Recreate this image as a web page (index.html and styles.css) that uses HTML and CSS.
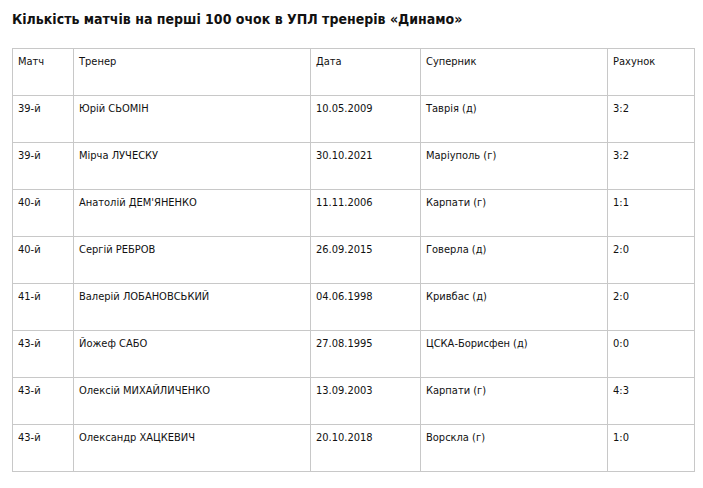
FILE: index.html
```html
<!DOCTYPE html>
<html lang="uk">
<head>
<meta charset="utf-8">
<link rel="stylesheet" href="styles.css">
</head>
<body>
<h2 class="title">Кількість матчів на перші 100 очок в УПЛ тренерів «Динамо»</h2>
<table class="stats">
  <colgroup>
    <col class="c1"><col class="c2"><col class="c3"><col class="c4"><col class="c5">
  </colgroup>
  <tr><td>Матч</td><td>Тренер</td><td>Дата</td><td>Суперник</td><td>Рахунок</td></tr>
  <tr><td>39-й</td><td>Юрій СЬОМІН</td><td>10.05.2009</td><td>Таврія (д)</td><td>3:2</td></tr>
  <tr><td>39-й</td><td>Мірча ЛУЧЕСКУ</td><td>30.10.2021</td><td>Маріуполь (г)</td><td>3:2</td></tr>
  <tr><td>40-й</td><td>Анатолій ДЕМ'ЯНЕНКО</td><td>11.11.2006</td><td>Карпати (г)</td><td>1:1</td></tr>
  <tr><td>40-й</td><td>Сергій РЕБРОВ</td><td>26.09.2015</td><td>Говерла (д)</td><td>2:0</td></tr>
  <tr><td>41-й</td><td>Валерій ЛОБАНОВСЬКИЙ</td><td>04.06.1998</td><td>Кривбас (д)</td><td>2:0</td></tr>
  <tr><td>43-й</td><td>Йожеф САБО</td><td>27.08.1995</td><td>ЦСКА-Борисфен (д)</td><td>0:0</td></tr>
  <tr><td>43-й</td><td>Олексій МИХАЙЛИЧЕНКО</td><td>13.09.2003</td><td>Карпати (г)</td><td>4:3</td></tr>
  <tr><td>43-й</td><td>Олександр ХАЦКЕВИЧ</td><td>20.10.2018</td><td>Ворскла (г)</td><td>1:0</td></tr>
</table>
</body>
</html>
```
FILE: styles.css
```css
html, body {
  margin: 0;
  padding: 0;
  background: #fff;
}
body {
  padding: 0 12px;
  font-family: "DejaVu Sans Condensed", "DejaVu Sans", sans-serif;
  color: #111;
}
.title {
  margin: 0;
  padding-top: 9px;
  font-size: 14px;
  line-height: 20px;
  font-weight: bold;
  color: #111;
}
.stats {
  margin-top: 19px;
  border-collapse: collapse;
  table-layout: fixed;
  width: 683px;
  font-size: 11px;
}
.c1 { width: 61px; }
.c2 { width: 237px; }
.c3 { width: 110px; }
.c4 { width: 187px; }
.c5 { width: 87px; }
.stats td {
  border: 1px solid #c8c8c8;
  padding: 6px 5px 26px;
  line-height: 14px;
  vertical-align: top;
  white-space: nowrap;
}
```
